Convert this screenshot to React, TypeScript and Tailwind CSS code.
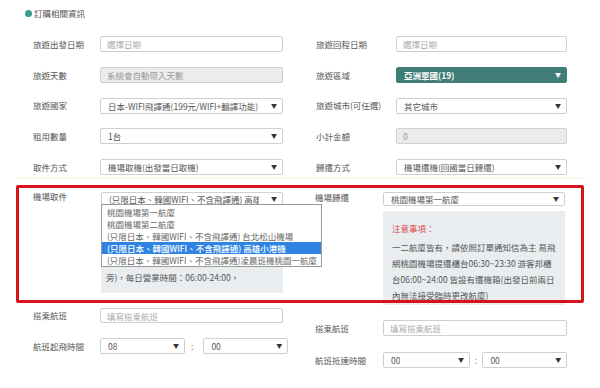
import React from "react";

const font = { fontFamily: '"Noto Sans CJK TC", "Noto Sans", sans-serif' };

function Arrow({ white }: { white?: boolean }) {
  return (
    <span
      className={`ml-auto pl-1 text-[6px] leading-none shrink-0 ${
        white ? "text-white" : "text-[#333]"
      }`}
    >
      ▼
    </span>
  );
}

function TextInput({ text, w, h = "h-4", disabled }: { text: string; w: string; h?: string; disabled?: boolean }) {
  return (
    <div
      className={`${w} ${h} flex items-center border border-[#cfcfcf] rounded-[2px] pl-[6px] ${
        disabled ? "bg-[#ececec] text-[#9a9a9a]" : "bg-white text-[#aaa]"
      }`}
    >
      <span className="leading-[12px] whitespace-nowrap">{text}</span>
    </div>
  );
}

function Select({ text, w, h = "h-4", green, clip }: { text: string; w: string; h?: string; green?: boolean; clip?: string }) {
  return (
    <div
      className={`${w} ${h} flex items-center rounded-[2px] pl-[7px] pr-[5px] ${
        green
          ? "bg-[#3f7d76] text-white font-bold border border-[#3f7d76]"
          : "bg-white text-[#555] border border-[#cfcfcf]"
      }`}
    >
      <span className={`whitespace-nowrap overflow-hidden leading-[12px] ${clip ?? ""}`}>{text}</span>
      <Arrow white={green} />
    </div>
  );
}

function Row({ l, r }: { l: [string, React.ReactNode]; r: [string, React.ReactNode] }) {
  return (
    <div className="flex items-center h-4">
      <div className="w-[67px] text-[#555] whitespace-nowrap">{l[0]}</div>
      {l[1]}
      <div className="ml-[33px] w-[80px] text-[#555] whitespace-nowrap">{r[0]}</div>
      {r[1]}
    </div>
  );
}

function TimePair({ a, b, w1, w2, gapL, gapR }: { a: string; b: string; w1: string; w2: string; gapL: string; gapR: string }) {
  return (
    <div className="flex items-center">
      <Select text={a} w={w1} />
      <span className={`${gapL} ${gapR} text-[#777]`}>:</span>
      <Select text={b} w={w2} />
    </div>
  );
}

const listItems = [
  "桃園機場第一航廈",
  "桃園機場第二航廈",
  "(只限日本、韓國WIFI、不含飛譯通) 台北松山機場",
  "(只限日本、韓國WIFI、不含飛譯通) 高雄小港機",
  "(只限日本、韓國WIFI、不含飛譯通)凌晨班機桃園一航廈",
];

export default function App() {
  return (
    <div className="relative w-[600px] h-[388px] bg-white overflow-hidden text-[8.5px] leading-none" style={font}>
      {/* header */}
      <div className="flex items-center pt-[7px] pl-[25px] h-[19px] text-[#555]">
        <span className="w-[7px] h-[7px] rounded-full bg-[#3c9a8f] mr-[2px]" />
        訂購相關資訊
      </div>

      {/* upper rows */}
      <div className="pl-[33px] pt-[17px] flex flex-col gap-[14.75px]">
        <Row
          l={["旅遊出發日期", <TextInput text="選擇日期" w="w-[183px]" />]}
          r={["旅遊回程日期", <TextInput text="選擇日期" w="w-[171px]" />]}
        />
        <Row
          l={["旅遊天數", <TextInput text="系統會自動帶入天數" w="w-[183px]" disabled />]}
          r={["旅遊區域", <Select text="亞洲單國(19)" w="w-[171px]" green />]}
        />
        <Row
          l={["旅遊國家", <Select text="日本-WIFI飛譯通(199元/WIFI+翻譯功能)" w="w-[183px]" />]}
          r={["旅遊城市(可任選)", <Select text="其它城市" w="w-[171px]" />]}
        />
        <Row
          l={["租用數量", <Select text="1台" w="w-[183px]" />]}
          r={["小計金額", <TextInput text="0" w="w-[171px]" disabled />]}
        />
        <Row
          l={["取件方式", <Select text="機場取機(出發當日取機)" w="w-[183px]" />]}
          r={["歸還方式", <Select text="機場還機(回國當日歸還)" w="w-[171px]" />]}
        />
      </div>

      <div className="mt-[3px] ml-[17px] w-[568px] h-px bg-[#faf4d6]" />

      {/* airport rows */}
      <div className="flex mt-[13px]">
        {/* left column */}
        <div className="pl-[33px] w-[315px] flex flex-col">
          <div className="relative flex items-center h-[13px]">
            <div className="w-[68px] text-[#555] self-start">機場取件</div>
            <Select
              text="(只限日本、韓國WIFI、不含飛譯通) 高雄小港機場"
              w="w-[182px]"
              h="h-[13px]"
              clip="max-w-[150px]"
            />
            <div className="absolute left-[68px] top-[12px] w-[221px] border border-[#9a9a9a] bg-white pt-px z-10">
              {listItems.map((t, i) => (
                <div
                  key={t}
                  className={`h-[12px] flex items-center pl-[5px] whitespace-nowrap overflow-hidden ${
                    i === 3 ? "bg-[#2f84e3] text-white font-medium" : "text-[#666]"
                  }`}
                >
                  {t}
                </div>
              ))}
            </div>
          </div>
          <div className="ml-[68px] w-[182px] h-[84px] mt-[4px] bg-[#e9edf0] flex items-end pl-[5px] pb-[8px] text-[#555]">
            <div className="h-4 flex items-center whitespace-nowrap">旁)，每日營業時間：06:00-24:00，</div>
          </div>
          <div className="flex items-center mt-[15px]">
            <div className="w-[67px] text-[#555]">搭乘航班</div>
            <TextInput text="填寫搭乘航班" w="w-[183px]" h="h-[15px]" />
          </div>
          <div className="flex items-center mt-[15px]">
            <div className="w-[67px] text-[#555]">航班起飛時間</div>
            <TimePair a="08" b="00" w1="w-[85px]" w2="w-[85px]" gapL="ml-[6px]" gapR="mr-[10px]" />
          </div>
        </div>

        {/* right column */}
        <div className="flex flex-col">
          <div className="flex items-start h-[14px]">
            <div className="w-[68px] text-[#555] pt-px">機場歸還</div>
            <Select text="桃園機場第一航廈" w="w-[182px]" h="h-[14px]" />
          </div>
          <div className="ml-[68px] w-[182px] h-[94px] mt-[5px] bg-[#e9edf0] pt-[9px] pl-[9px] text-[#555] whitespace-nowrap">
            <div className="h-4 flex items-center text-[#e0484a]">注意事項：</div>
            <div className="mt-[3px] leading-[16px]">
              一二航廈皆有，請依照訂單通知信為主 易飛
              <br />
              網桃園機場提還櫃台06:30~23:30 游客邦櫃
              <br />
              台06:00~24:00 皆設有還機箱(出發日前兩日
              <br />
              內無法接受臨時更改航廈)
            </div>
          </div>
          <div className="flex items-center mt-[15px]">
            <div className="w-[68px] text-[#555]">搭乘航班</div>
            <TextInput text="填寫搭乘航班" w="w-[184px]" />
          </div>
          <div className="flex items-center mt-[16px]">
            <div className="w-[68px] text-[#555]">航班抵達時間</div>
            <TimePair a="00" b="00" w1="w-[87px]" w2="w-[85px]" gapL="ml-[5px]" gapR="mr-[5px]" />
          </div>
        </div>
      </div>

      {/* red annotation box */}
      <div className="absolute left-[16px] top-[185px] w-[568px] h-[118px] border-[3px] border-[#d7121b] rounded-[2px] pointer-events-none z-20" />
    </div>
  );
}
